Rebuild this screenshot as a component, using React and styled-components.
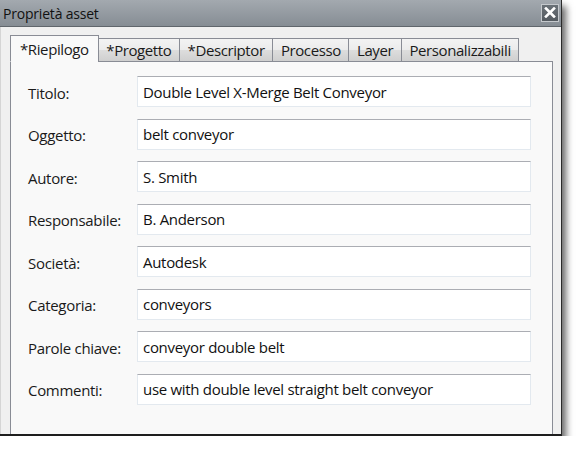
import React from 'react';
import styled, { createGlobalStyle } from 'styled-components';

const GlobalStyle = createGlobalStyle`
  html, body {
    margin: 0;
    padding: 0;
    background: #ffffff;
  }
  body {
    font-family: "Open Sans", "Noto Sans", sans-serif;
  }
`;

const tabs = [
  { label: '*Riepilogo', active: true },
  { label: '*Progetto' },
  { label: '*Descriptor' },
  { label: 'Processo' },
  { label: 'Layer' },
  { label: 'Personalizzabili' },
];

const fields = [
  ['Titolo:', 'Double Level X-Merge Belt Conveyor'],
  ['Oggetto:', 'belt conveyor'],
  ['Autore:', 'S. Smith'],
  ['Responsabile:', 'B. Anderson'],
  ['Società:', 'Autodesk'],
  ['Categoria:', 'conveyors'],
  ['Parole chiave:', 'conveyor double belt'],
  ['Commenti:', 'use with double level straight belt conveyor'],
];

const Window = styled.div`
  width: 562px;
  height: 436px;
  box-sizing: border-box;
  display: flex;
  flex-direction: column;
  border-right: 1px solid #2a2a2a;
  border-bottom: 2px solid #1e1e1e;
  box-shadow: 4px 6px 7px rgba(0, 0, 0, 0.6);
  background: #f0f0f0;
`;

const TitleBar = styled.div`
  height: 27px;
  flex: none;
  display: flex;
  align-items: center;
  justify-content: space-between;
  padding: 0 2px 0 3px;
  background: linear-gradient(#a3a9af, #868d94);
  border-bottom: 1px solid #60666c;
  box-sizing: border-box;
`;

const Title = styled.span`
  font-family: "Open Sans", "Noto Sans", sans-serif;
  font-size: 14px;
  color: #111;
  letter-spacing: -0.2px;
`;

const CloseButton = styled.div`
  width: 18px;
  height: 18px;
  box-sizing: border-box;
  border: 1px solid #c4c8cc;
  background: linear-gradient(#6a7177, #555b61);
  display: flex;
  align-items: center;
  justify-content: center;
  margin-top: -1px;
`;

const Client = styled.div`
  flex: 1;
  display: flex;
  flex-direction: column;
  padding: 8px 8px 0 9px;
  border-left: 1px solid #d5d5d5;
  min-height: 0;
`;

const TabRow = styled.div`
  display: flex;
  align-items: flex-end;
  height: 27px;
  flex: none;
  position: relative;
  z-index: 1;
  margin-bottom: -1px;
`;

const Tab = styled.div`
  box-sizing: border-box;
  height: ${p => (p.$active ? '27px' : '24px')};
  padding: 0 ${p => (p.$active ? '9px' : '7.6px')};
  margin-left: ${p => (p.$first ? '0' : '-1px')};
  display: flex;
  align-items: center;
  font-size: 15px;
  color: #1a1a1a;
  border: 1px solid #898c95;
  border-bottom: ${p => (p.$active ? '1px solid #f9f9f9' : '1px solid #898c95')};
  background: ${p => (p.$active ? '#f9f9f9' : 'linear-gradient(#f3f3f3 0%, #ebebeb 50%, #dddddd 51%, #cfcfcf 100%)')};
  letter-spacing: -0.4px;
`;

const Panel = styled.div`
  flex: 1;
  background: #f9f9f9;
  border: 1px solid #898c95;
  border-bottom: none;
  padding: 14px 21px 0 17px;
  display: flex;
  flex-direction: column;
  gap: 11.5px;
`;

const Row = styled.div`
  display: flex;
  align-items: center;
  height: 31px;
`;

const Label = styled.label`
  width: 109px;
  flex: none;
  font-size: 15px;
  color: #1a1a1a;
  padding-top: 2px;
  letter-spacing: -0.3px;
`;

const Field = styled.div`
  flex: 1;
  height: 31px;
  box-sizing: border-box;
  background: #ffffff;
  border: 1px solid #e3e9ef;
  border-top-color: #abadb3;
  display: flex;
  align-items: center;
  padding: 0 5px;
  font-size: 15px;
  color: #111;
  letter-spacing: -0.3px;
`;

export default function App() {
  return (
    <>
      <GlobalStyle />
      <Window>
        <TitleBar>
          <Title>Proprietà asset</Title>
          <CloseButton>
            <svg width="12" height="11" viewBox="0 0 12 11">
              <path d="M2 1.5 L10 9.5 M10 1.5 L2 9.5" stroke="#ffffff" strokeWidth="2.6" strokeLinecap="square" />
            </svg>
          </CloseButton>
        </TitleBar>
        <Client>
          <TabRow>
            {tabs.map((t, i) => (
              <Tab key={t.label} $active={t.active} $first={i === 0}>
                {t.label}
              </Tab>
            ))}
          </TabRow>
          <Panel>
            {fields.map(([label, value]) => (
              <Row key={label}>
                <Label>{label}</Label>
                <Field>{value}</Field>
              </Row>
            ))}
          </Panel>
        </Client>
      </Window>
    </>
  );
}
